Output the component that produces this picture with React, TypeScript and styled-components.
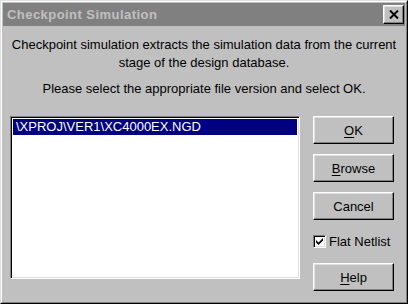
import React from 'react';
import styled, { createGlobalStyle } from 'styled-components';

const GlobalStyle = createGlobalStyle`
    html, body {
        margin: 0;
        padding: 0;
        background: #c0c0c0;
    }
    body {
        font-family: "Liberation Sans", Arial, sans-serif;
        font-size: 13px;
        color: #000;
    }
`;

const Window = styled.div`
    box-sizing: border-box;
    width: 408px;
    height: 304px;
    background: #c0c0c0;
    border-style: solid;
    border-width: 1px;
    border-color: #dfdfdf #000 #000 #dfdfdf;
    display: flex;
    flex-direction: column;
`;

const Frame = styled.div`
    flex: 1;
    display: flex;
    flex-direction: column;
    border-style: solid;
    border-width: 1px;
    border-color: #fff #808080 #808080 #fff;
    padding: 1px;
`;

const TitleBar = styled.div`
    height: 23px;
    background: #808080;
    display: flex;
    align-items: center;
    justify-content: space-between;
    padding: 0 1px 0 4px;
`;

const Title = styled.span`
    color: #c0c0c0;
    font-weight: bold;
    font-size: 13px;
    letter-spacing: 0.45px;
`;

const CloseButton = styled.div`
    box-sizing: border-box;
    width: 21px;
    height: 19px;
    background: #c0c0c0;
    border-style: solid;
    border-width: 1px;
    border-color: #fff #000 #000 #fff;
    box-shadow: inset -1px -1px 0 #808080, inset 1px 1px 0 #dfdfdf;
    display: flex;
    align-items: center;
    justify-content: center;
`;

const Body = styled.div`
    flex: 1;
    display: flex;
    flex-direction: column;
    padding: 10px 7px 0 7px;
`;

const Message = styled.p<{ gapAfter: number }>`
    margin: 0 0 ${p => p.gapAfter}px 0;
    text-align: center;
    line-height: 18px;
`;

const Row = styled.div`
    display: flex;
    gap: 13px;
`;

const ListBox = styled.div`
    box-sizing: border-box;
    width: 290px;
    height: 163px;
    background: #fff;
    border-style: solid;
    border-width: 1px;
    border-color: #808080 #fff #fff #808080;
    box-shadow: inset 1px 1px 0 #000, inset -1px -1px 0 #dfdfdf;
    padding: 2px;
`;

const ListItem = styled.div<{ selected?: boolean }>`
    height: 16px;
    line-height: 16px;
    padding-left: 3px;
    background: ${p => (p.selected ? '#000080' : 'transparent')};
    color: ${p => (p.selected ? '#fff' : '#000')};
    white-space: nowrap;
`;

const ButtonColumn = styled.div`
    display: flex;
    flex-direction: column;
    gap: 10px;
    width: 81px;
`;

const Button = styled.div`
    box-sizing: border-box;
    height: 28px;
    border-style: solid;
    border-width: 1px;
    border-color: #fff #000 #000 #fff;
    box-shadow: inset -1px -1px 0 #808080, inset 1px 1px 0 #dfdfdf;
    display: flex;
    align-items: center;
    justify-content: center;
    background: #c0c0c0;
`;

const Key = styled.span`
    text-decoration: underline;
    text-underline-offset: 2px;
`;

const CheckRow = styled.label`
    height: 23px;
    display: flex;
    align-items: center;
    gap: 3px;
`;

const CheckBox = styled.span`
    box-sizing: border-box;
    width: 13px;
    height: 13px;
    background: #fff;
    border-style: solid;
    border-width: 1px;
    border-color: #808080 #fff #fff #808080;
    box-shadow: inset 1px 1px 0 #000, inset -1px -1px 0 #dfdfdf;
    display: flex;
    align-items: center;
    justify-content: center;
`;

const App = () => {
    return <>
        <GlobalStyle />
        <Window>
            <Frame>
                <TitleBar>
                    <Title>Checkpoint Simulation</Title>
                    <CloseButton>
                        <svg width="10" height="9" viewBox="0 0 10 9">
                            <path d="M1 0.5 L9 8.5 M9 0.5 L1 8.5" stroke="#000" strokeWidth="2" />
                        </svg>
                    </CloseButton>
                </TitleBar>
                <Body>
                    <Message gapAfter={8}>
                        Checkpoint simulation extracts the simulation data from the current<br />
                        stage of the design database.
                    </Message>
                    <Message gapAfter={18}>
                        Please select the appropriate file version and select OK.
                    </Message>
                    <Row>
                        <ListBox>
                            <ListItem selected>\XPROJ\VER1\XC4000EX.NGD</ListItem>
                        </ListBox>
                        <ButtonColumn>
                            <Button><Key>O</Key>K</Button>
                            <Button><Key>B</Key>rowse</Button>
                            <Button>Cancel</Button>
                            <CheckRow>
                                <CheckBox>
                                    <svg width="9" height="9" viewBox="0 0 9 9">
                                        <path d="M1 3 L1 5.5 L3.5 8 L8 3.5 L8 1 L3.5 5.5 Z" fill="#000" />
                                    </svg>
                                </CheckBox>
                                Flat Netlist
                            </CheckRow>
                            <Button><Key>H</Key>elp</Button>
                        </ButtonColumn>
                    </Row>
                </Body>
            </Frame>
        </Window>
    </>;
};

export default App;
